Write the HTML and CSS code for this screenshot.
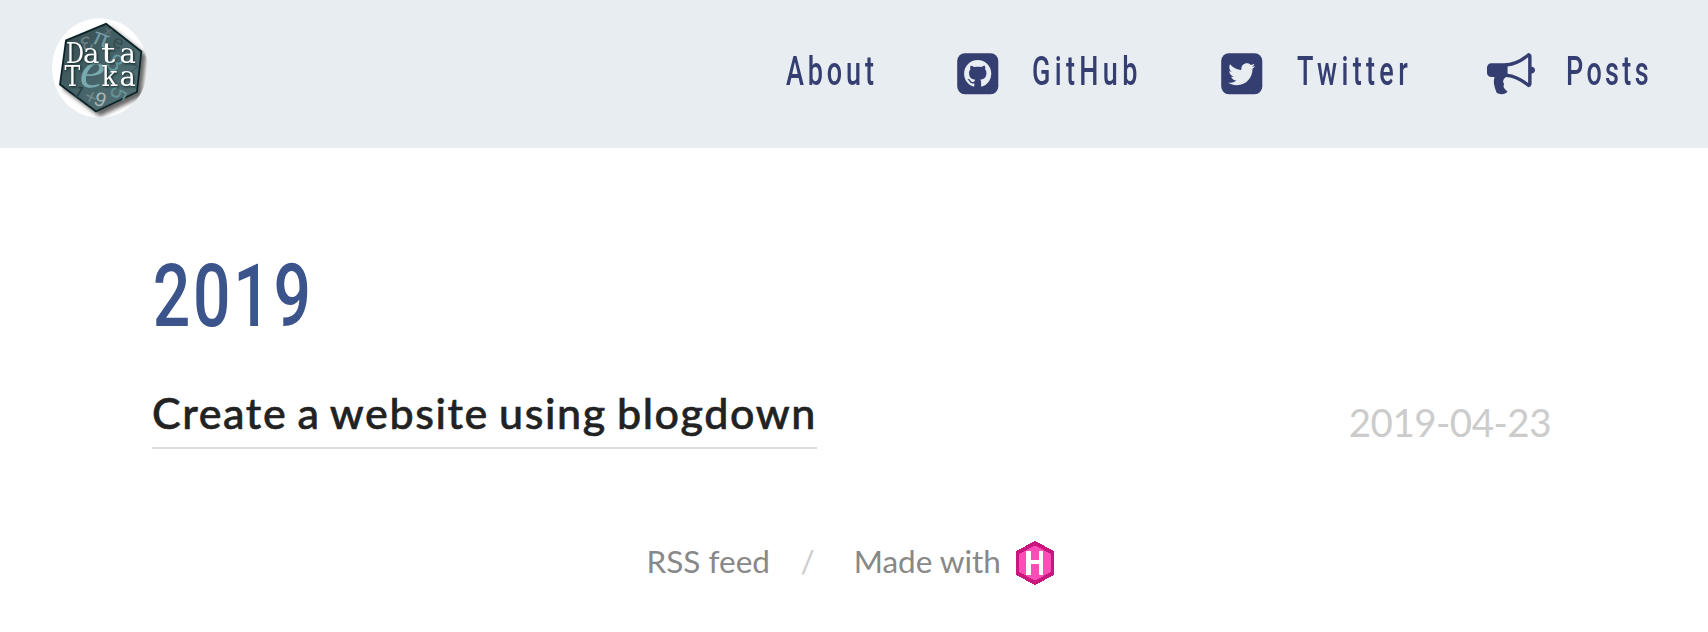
FILE: index.html
```html
<!DOCTYPE html>
<html lang="en">
<head>
<meta charset="utf-8">
<title>Posts</title>
<link rel="stylesheet" href="styles.css">
</head>
<body>
<header class="header">
  <a class="logo" href="#">
    <svg width="96" height="100" viewBox="12 9.5 96 100">
      <defs>
        <linearGradient id="hex" x1="0" y1="0" x2="1" y2="1"><stop offset="0" stop-color="#35494d"/><stop offset=".5" stop-color="#456368"/><stop offset="1" stop-color="#587377"/></linearGradient>
        <filter id="shadow" x="-20%" y="-20%" width="150%" height="150%"><feDropShadow dx="4" dy="4" stdDeviation="2" flood-color="#000" flood-opacity=".6"/></filter>
        <clipPath id="round"><ellipse cx="59.8" cy="59.5" rx="47.7" ry="49.7"/></clipPath>
      </defs>
      <g clip-path="url(#round)">
        <rect width="120" height="120" fill="#fff"/>
        <path d="M66 15.3 101.3 43 97 83.5 56 103 20 76 26 32Z" fill="url(#hex)" stroke="#0b2427" stroke-width="1.8" filter="url(#shadow)"/>
        <g class="glyphs">
          <text x="41" y="42" font-size="19" fill="#738386" transform="rotate(-25 45 35)">Ɛ</text>
          <text x="53" y="37" font-size="24" fill="#739da8" transform="rotate(20 60 30)">π</text>
          <text x="64" y="28" font-size="15" fill="#68777b" transform="rotate(10 68 24)">×</text>
          <text x="73" y="40" font-size="19" fill="#354c4d" transform="rotate(25 78 34)">e</text>
          <text x="68" y="62" font-size="25" fill="#669aa0" transform="rotate(42 74 54)">8</text>
          <text x="88" y="67" font-size="18" fill="#405b5f" transform="rotate(25 91 60)">7</text>
          <text class="euler" x="40" y="79" font-size="54" fill="#78abb0" transform="rotate(8 51 67)">e</text>
          <text x="35" y="90" font-size="17" fill="#273b3d" transform="rotate(30 40 83)">1</text>
          <text x="45" y="95" font-size="21" fill="#74878a" transform="rotate(25 50 88)">+</text>
          <text x="55" y="98" font-size="20" fill="#a7b8ba" transform="rotate(20 61 90)">9</text>
          <text x="72" y="92" font-size="22" fill="#669397" transform="rotate(115 78 85)">5</text>
        </g>
        <g class="wordmark">
          <text transform="translate(26 54.500) scale(.82 1)">D</text>
          <text transform="translate(43 54.500)">a</text>
          <text transform="translate(61 54.500) scale(1.3 1)">t</text>
          <text transform="translate(79.500 54.500)">a</text>
          <text transform="translate(24.500 77.300) scale(.86 1)">T</text>
          <text transform="translate(61.500 77.300) scale(.95 1)">k</text>
          <text transform="translate(79.500 77.300)">a</text>
        </g>
      </g>
    </svg>
  </a>
  <nav class="nav">
    <a class="nav-link about" href="#"><span>About</span></a>
    <a class="nav-link github" href="#">
      <svg class="icon" width="42" height="42" viewBox="0 0 42 42"><rect x=".2" y=".2" width="41.1" height="41.1" rx="7.7" fill="#353e71"/><path transform="translate(7.1 7.1) scale(1.7)" fill="#e8edf1" d="M8 0C3.58 0 0 3.58 0 8c0 3.54 2.29 6.53 5.47 7.59.4.07.55-.17.55-.38 0-.19-.01-.82-.01-1.49-2.01.37-2.53-.49-2.69-.94-.09-.23-.48-.94-.82-1.13-.28-.15-.68-.52-.01-.53.63-.01 1.08.58 1.23.82.72 1.21 1.87.87 2.33.66.07-.52.28-.87.51-1.07-1.78-.2-3.64-.89-3.64-3.95 0-.87.31-1.59.82-2.15-.08-.2-.36-1.02.08-2.12 0 0 .67-.21 2.2.82.64-.18 1.32-.27 2-.27s1.36.09 2 .27c1.53-1.04 2.2-.82 2.2-.82.44 1.1.16 1.92.08 2.12.51.56.82 1.27.82 2.15 0 3.07-1.87 3.75-3.65 3.95.29.25.54.73.54 1.48 0 1.07-.01 1.93-.01 2.2 0 .21.15.46.55.38A8.01 8.01 0 0 0 16 8c0-4.42-3.58-8-8-8z"/></svg>
      <span>GitHub</span>
    </a>
    <a class="nav-link twitter" href="#">
      <svg class="icon" width="42" height="42" viewBox="0 0 42 42"><rect x=".2" y=".2" width="41.1" height="41.1" rx="7.7" fill="#353e71"/><path transform="translate(7.2 7.8) scale(1.125)" fill="#e8edf1" d="M23.954 4.569c-.885.389-1.83.654-2.825.775 1.014-.611 1.794-1.574 2.163-2.723-.951.555-2.005.959-3.127 1.184-.896-.959-2.173-1.559-3.591-1.559-2.717 0-4.92 2.203-4.92 4.917 0 .39.045.765.127 1.124C7.691 8.094 4.066 6.13 1.64 3.161c-.427.722-.666 1.561-.666 2.475 0 1.71.87 3.213 2.188 4.096-.807-.026-1.566-.248-2.228-.616v.061c0 2.385 1.693 4.374 3.946 4.827-.413.111-.849.171-1.296.171-.314 0-.615-.03-.916-.086.631 1.953 2.445 3.377 4.604 3.417-1.68 1.319-3.809 2.105-6.102 2.105-.39 0-.779-.023-1.17-.067 2.189 1.394 4.768 2.209 7.557 2.209 9.054 0 13.999-7.496 13.999-13.986 0-.209 0-.42-.015-.63.961-.689 1.8-1.56 2.46-2.548z"/></svg>
      <span>Twitter</span>
    </a>
    <a class="nav-link posts" href="#">
      <svg class="icon" width="48" height="42" viewBox="0 128 1792 1568"><path fill="#353e71" d="M1664 640q53 0 90.500 37.500t37.500 90.500-37.500 90.500-90.500 37.500v384q0 52-38 90t-90 38q-417-347-812-380-58 19-91 66t-31 100.500 40 92.500q-20 33-23 65.500t6 58 33.500 55 48 50 61.500 50.500q-29 58-111.500 83t-168.500 11.500-132-55.500q-7-23-29.500-87.500t-32-94.500-23-89-15-101 3.500-98.500 22-110.500h-122q-66 0-113-47t-47-113v-192q0-66 47-113t113-47h480q435 0 896-384 52 0 90 38t38 90v384zm-128 604v-954q-394 302-768 343v270q377 42 768 341z"/></svg>
      <span>Posts</span>
    </a>
  </nav>
</header>
<main class="content">
  <h1 class="year"><span>2019</span></h1>
  <article class="post">
    <a class="post-title" href="#">Create a website using blogdown</a>
    <time class="post-date">2019-04-23</time>
  </article>
</main>
<footer class="footer">
  <a class="rss" href="#">RSS feed</a>
  <span class="slash">/</span>
  <a class="made" href="#">Made with</a>
  <svg class="hugo" width="38" height="44" viewBox="0 0 38 44" shape-rendering="crispEdges"><path fill="#c9177e" d="M19 0 38 10V34L19 44 0 34V10Z"/><path fill="#ff4db8" d="M19 4.500 35 13V31L19 39.500 3 31V13Z"/><path fill="#fff" d="M10 10h5v9h8v-9h4v24h-4V23h-8v11h-5Z"/></svg>
</footer>
</body>
</html>
```

FILE: styles.css
```css
* { box-sizing: border-box; }

body {
  margin: 0;
  background: #fff;
  font-family: Lato, "Open Sans", sans-serif;
}

a { color: inherit; text-decoration: none; }
svg { display: block; flex: none; }

.header {
  display: flex;
  justify-content: space-between;
  height: 148px;
  padding: 17.5px 58px 0 52px;
  background: #e8edf1;
}

.glyphs { font-family: "Liberation Sans", sans-serif; }
.euler { font-family: "Liberation Serif", serif; font-style: italic; }

.wordmark {
  font: 27.5px "DejaVu Serif", serif;
  fill: #fff;
  filter: drop-shadow(1px 1px 1px #102426);
}

.nav {
  display: flex;
  padding-top: 35.5px;
}

.nav-link {
  display: flex;
  height: 42px;
  color: #353e71;
  font: 500 41.5px/42px Roboto, sans-serif;
  white-space: nowrap;
}

.nav-link span {
  display: block;
  transform: scaleX(0.65);
  transform-origin: left;
  letter-spacing: 6px;
  margin-top: -3px;
}

.nav-link.github span { letter-spacing: 6.7px; }
.nav-link.twitter span { letter-spacing: 6.7px; }
.nav-link.posts span { letter-spacing: 5.200px; }

.about { width: 171px; }
.github { width: 264px; }
.twitter { width: 266px; }
.posts { width: 163px; }
.github .icon { margin-right: 33px; }
.twitter .icon { margin-right: 34px; }
.posts .icon { margin-right: 31px; }

.content { padding: 0 157px 0 152px; }

.year {
  margin: 98px 0 0;
  color: #3c548c;
  font: 500 88px/100px Roboto, sans-serif;
}

.year span {
  display: block;
  padding-left: 1px;
  transform: scaleX(0.75);
  transform-origin: left;
  letter-spacing: 3.600px;
}

.post {
  display: flex;
  justify-content: space-between;
  align-items: flex-start;
  margin-top: 40px;
}

.post-title {
  height: 62.500px;
  border-bottom: 2px solid #ddd;
  color: #222;
  font-size: 43px;
  font-weight: 500;
  line-height: 54px;
  letter-spacing: 1.600px;
  word-spacing: -2.300px;
  -webkit-text-stroke: 0.6px #222;
}

.post-date {
  padding-top: 12px;
  color: #ccc;
  font-size: 38.500px;
  line-height: 49px;
  letter-spacing: -0.5px;
}

.footer {
  display: flex;
  margin-top: 91px;
  padding-left: 646.5px;
  color: #888;
  font-size: 31.500px;
  line-height: 42px;
}

.slash { margin: 0 39px 0 30.5px; color: #ccc; }
.hugo { margin: 1px 0 0 15px; }
```
